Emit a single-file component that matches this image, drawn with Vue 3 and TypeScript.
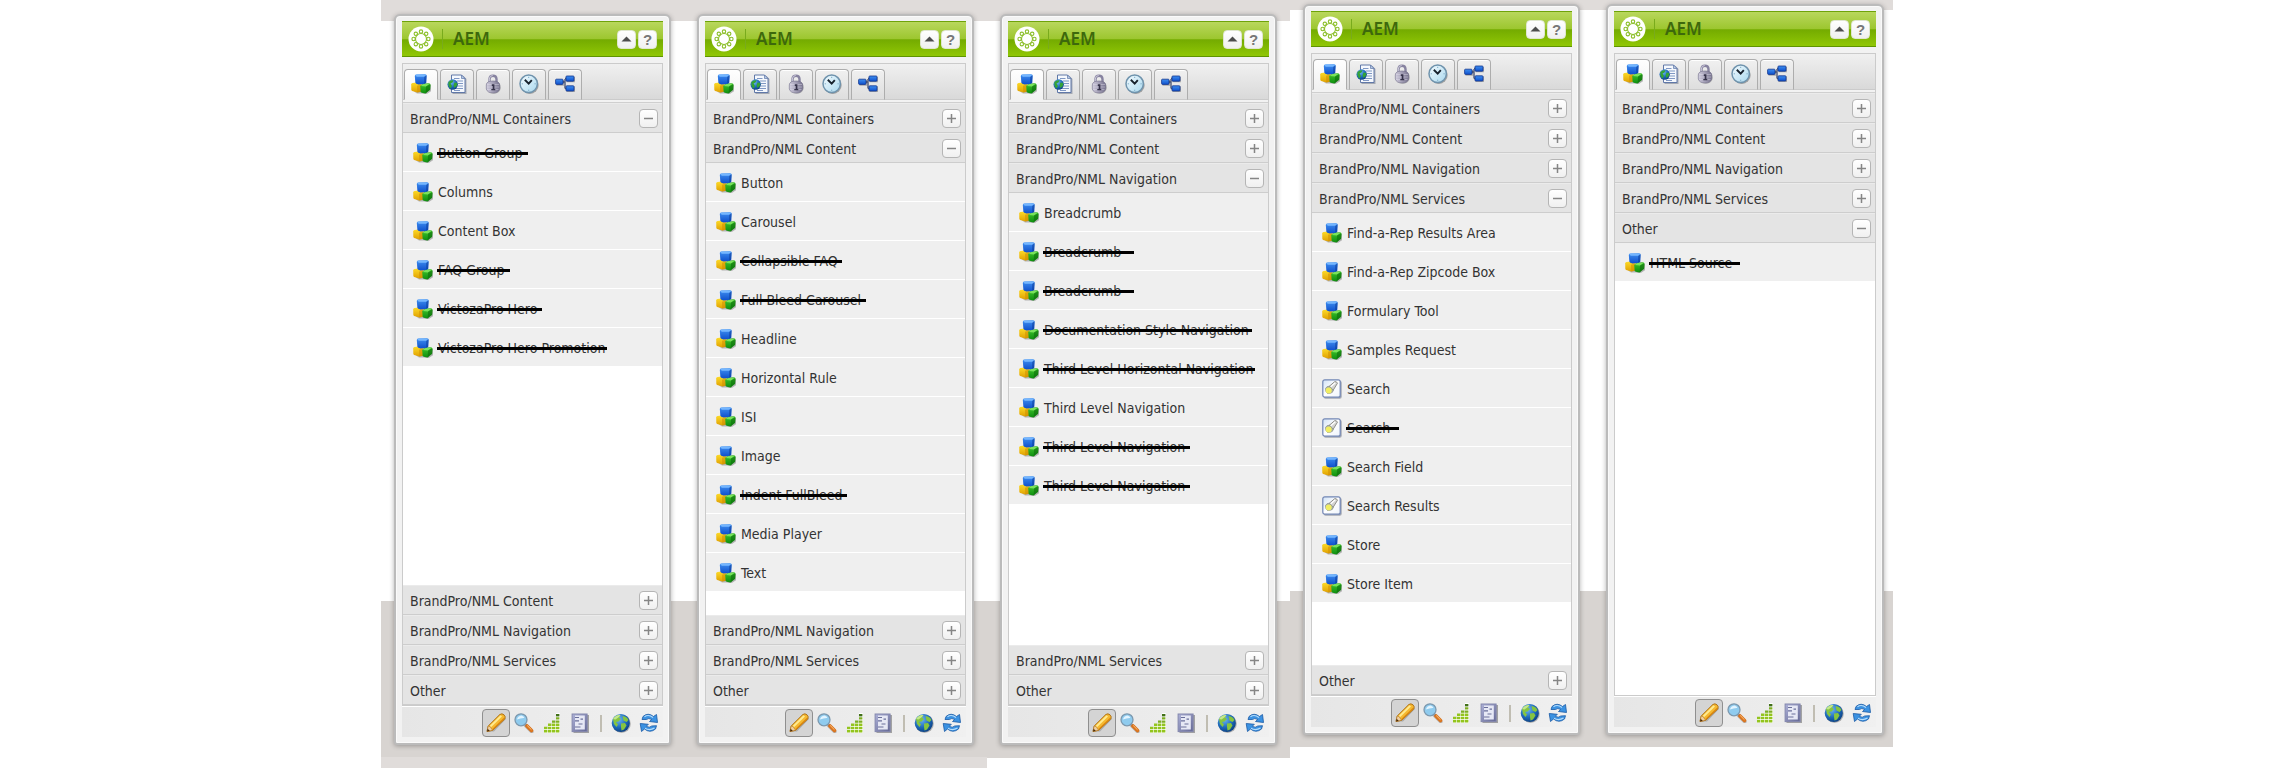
<script setup lang="ts">
import { ref } from 'vue'

interface Item {
  name: string
  icon?: string
  // how far the strike line runs past the end of a retired name, in pixels
  strike?: number
}

interface Panel {
  id: string
  tone: string
  open: number
  items: Item[]
}

const groups: string[] = [
  'BrandPro/NML Containers',
  'BrandPro/NML Content',
  'BrandPro/NML Navigation',
  'BrandPro/NML Services',
  'Other',
]

const tabs = [
  { icon: 'blocks', label: 'Components' },
  { icon: 'page', label: 'Page' },
  { icon: 'lock', label: 'Information' },
  { icon: 'clock', label: 'Versioning' },
  { icon: 'flow', label: 'Workflow' },
]

const panels = ref<Panel[]>([
  {
    id: 'containers',
    tone: 'tall',
    open: 0,
    items: [
      { name: 'Button Group', strike: 5 },
      { name: 'Columns' },
      { name: 'Content Box' },
      { name: 'FAQ Group', strike: 5 },
      { name: 'VictozaPro Hero', strike: 5 },
      { name: 'VictozaPro Hero Promotion', strike: 2 },
    ],
  },
  {
    id: 'content',
    tone: 'tall',
    open: 1,
    items: [
      { name: 'Button' },
      { name: 'Carousel' },
      { name: 'Collapsible FAQ', strike: 4 },
      { name: 'Full Bleed Carousel', strike: 5 },
      { name: 'Headline' },
      { name: 'Horizontal Rule' },
      { name: 'ISI' },
      { name: 'Image' },
      { name: 'Indent FullBleed', strike: 5 },
      { name: 'Media Player' },
      { name: 'Text' },
    ],
  },
  {
    id: 'navigation',
    tone: 'medium',
    open: 2,
    items: [
      { name: 'Breadcrumb' },
      { name: 'Breadcrumb', strike: 13 },
      { name: 'Breadcrumb', strike: 13 },
      { name: 'Documentation Style Navigation', strike: 3 },
      { name: 'Third Level Horizontal Navigation', strike: 1 },
      { name: 'Third Level Navigation' },
      { name: 'Third Level Navigation', strike: 5 },
      { name: 'Third Level Navigation', strike: 5 },
    ],
  },
  {
    id: 'services',
    tone: 'short',
    open: 3,
    items: [
      { name: 'Find-a-Rep Results Area' },
      { name: 'Find-a-Rep Zipcode Box' },
      { name: 'Formulary Tool' },
      { name: 'Samples Request' },
      { name: 'Search', icon: 'torch' },
      { name: 'Search', icon: 'torch', strike: 9 },
      { name: 'Search Field' },
      { name: 'Search Results', icon: 'torch' },
      { name: 'Store' },
      { name: 'Store Item' },
    ],
  },
  {
    id: 'other',
    tone: 'short',
    open: 4,
    items: [{ name: 'HTML Source', strike: 8 }],
  },
])
</script>

<template>
  <svg class="sprite" aria-hidden="true">
    <defs>
      <linearGradient id="gBlue" x1="0" y1="0" x2="0" y2="1">
        <stop offset="0" stop-color="#3f8ff0" /><stop offset="1" stop-color="#0f50cc" />
      </linearGradient>
      <linearGradient id="gGreen" x1="0" y1="0" x2="0" y2="1">
        <stop offset="0" stop-color="#3fc42c" /><stop offset="1" stop-color="#0f8f10" />
      </linearGradient>
      <linearGradient id="gYellow" x1="0" y1="0" x2="0" y2="1">
        <stop offset="0" stop-color="#fddc2a" /><stop offset="1" stop-color="#e0a000" />
      </linearGradient>
      <linearGradient id="gLock" x1="0" y1="0" x2="1" y2="0">
        <stop offset="0" stop-color="#cfcbdd" /><stop offset="1" stop-color="#77738f" />
      </linearGradient>
      <radialGradient id="gGlobe" cx=".38" cy=".3" r=".75">
        <stop offset="0" stop-color="#6fb8f5" /><stop offset=".6" stop-color="#1c68b8" /><stop offset="1" stop-color="#0b3c7d" />
      </radialGradient>
      <linearGradient id="gClock" x1="0" y1="0" x2="1" y2="1">
        <stop offset="0" stop-color="#f4fbff" /><stop offset="1" stop-color="#a9d8ee" />
      </linearGradient>
      <linearGradient id="gDoc" x1="0" y1="0" x2="1" y2="1">
        <stop offset="0" stop-color="#aeb2d8" /><stop offset="1" stop-color="#636794" />
      </linearGradient>
      <linearGradient id="gTorch" x1="0" y1="0" x2="1" y2="1">
        <stop offset="0" stop-color="#cfe1f7" /><stop offset=".5" stop-color="#ffffff" /><stop offset="1" stop-color="#eef4fb" />
      </linearGradient>
    </defs>

    <symbol id="blocks" viewBox="0 0 20 20">
      <path d="M3 17.500 6 19.500H11L15 20.500 20.500 17V12L17 9H11Z" fill="#000" opacity=".25" />
      <path d="M.2 10.300Q.3 9.300 1.500 9L8 8.300 10.500 10V17.500L6.500 18.600 1.200 17Q.4 16.600.3 15.500Z" fill="url(#gYellow)" />
      <path d="M6 11.800 10.300 10.400V17.500L6.300 18.600Z" fill="#c98800" opacity=".5" />
      <path d="M3.800 2Q3.900.9 5 .6L14 .3Q15.700.5 15.700 1.800L15.200 8.500Q14.900 9.600 13.800 9.900L7.500 10.400Q4.700 10.200 4.400 8.800Z" fill="url(#gBlue)" />
      <path d="M4.200 1.300 6.500.5 15.300.7 13.300 2.700 5.800 2.800Z" fill="#74b6ff" />
      <path d="M13.200 2.900 15.600 1.300 15.200 8.600 13.200 9.900Z" fill="#08348f" opacity=".5" />
      <path d="M9.200 12 12 10 18.200 9.300Q19.500 9.800 19.500 11L19.100 15.700 14.500 19.400 10.800 18.700Q9.700 18.200 9.600 17.200Z" fill="url(#gGreen)" />
      <path d="M9.800 12 12.500 10.100 18.600 9.700 15 12.500Z" fill="#7be25c" />
      <path d="M15 12.500 19.400 10.300 19.100 15.700 14.700 19.200Z" fill="#076008" opacity=".5" />
    </symbol>

    <symbol id="page" viewBox="0 0 20 20">
      <path d="M5.500 2H16.500L19.500 5V20H5.500Z" fill="#33415f" opacity=".35" />
      <path d="M4.500 1H14.500L18 4.500V18.500H4.500Z" fill="#f5f8fd" stroke="#6078a8" />
      <path d="M14.500 1V4.500H18Z" fill="#b9cbe8" stroke="#6078a8" stroke-width=".7" />
      <path d="M7 4.500H12.500M10 7H16M11 9.500H16M11 12H16M9 14.500H16M7 16.500H13" stroke="#7f97c4" stroke-width="1.200" />
      <circle cx="5.700" cy="10.500" r="5.200" fill="url(#gGlobe)" />
      <path d="M1.500 8Q4 5.500 6.500 6.500L5.500 8.500 3.500 9.500 5 12 3.500 14.500Q.8 12 1.500 8ZM7.500 8.500 10.300 9 9.800 12 7.500 14 6.500 11.500Z" fill="#35a336" />
    </symbol>

    <symbol id="lock" viewBox="0 0 20 20">
      <path d="M6.500 9V5Q6.700 1.700 10 1.700T13.500 5V9" fill="none" stroke="#8783a0" stroke-width="2.400" />
      <path d="M6.300 8V5Q6.500 1.500 9.700 1.500" fill="none" stroke="#d5d2e2" stroke-width=".9" />
      <ellipse cx="11" cy="13.500" rx="6.800" ry="6.200" fill="#222" opacity=".25" />
      <path d="M3.300 11Q3.300 7 10 7T16.700 11V15Q15.500 19 10 19T3.300 15Z" fill="url(#gLock)" stroke="#716d88" stroke-width=".6" />
      <path d="M4 10.500H16M4 13H16M4 15.500H15.500" stroke="#e2e0ec" stroke-width=".6" opacity=".7" />
      <path d="M8.800 10.200H11.400V15.500H9.700V12H8.800ZM8.300 15H12.300V16.200H8.300Z" fill="#36334a" />
    </symbol>

    <symbol id="clock" viewBox="0 0 20 20">
      <circle cx="10.700" cy="10.900" r="9" fill="#222" opacity=".35" />
      <circle cx="9.700" cy="9.800" r="8.700" fill="url(#gClock)" stroke="#6f93ad" stroke-width="1.500" />
      <path d="M9.700 2.800V4M9.700 15.700V16.900M2.700 9.800H3.900M15.500 9.800H16.700" stroke="#7ba9c4" />
      <path d="M5.800 5.800 9.700 9.600 12.800 6.200" fill="none" stroke="#17212c" stroke-width="1.900" />
    </symbol>

    <symbol id="flow" viewBox="0 0 20 20">
      <path d="M7 8H10M10 5V14.500M10 4.500H12M10 14.500H12" fill="none" stroke="#4c5878" stroke-width="1.400" />
      <path d="M1.500 6H9V11.700H1.500ZM11.500 3H20.500V8.200H11.500ZM11.500 12.500H20.500V18H11.500Z" fill="#222" opacity=".3" />
      <g fill="url(#gBlue)" stroke="#11358f" stroke-width=".8">
        <rect x=".6" y="5.200" width="7.400" height="5.200" rx=".8" />
        <rect x="11" y="2" width="8" height="5.200" rx=".8" />
        <rect x="11" y="11.800" width="8" height="5.200" rx=".8" />
      </g>
    </symbol>

    <symbol id="torch" viewBox="0 0 20 20">
      <rect x="1.700" y="1.700" width="18" height="18" rx="2" fill="#333d55" opacity=".4" />
      <rect x=".8" y=".8" width="17.400" height="17.400" rx="2" fill="url(#gTorch)" stroke="#7286b4" stroke-width="1.200" />
      <path d="M7 7.500 12.500 2.800Q14.500 2 15.500 4.200L11 11.500Z" fill="#d3d3d0" stroke="#85857f" stroke-width=".9" />
      <path d="M8.500 8 13.300 3.700" stroke="#fff" stroke-width="1.200" />
      <path d="M3.500 9.500Q4.500 7 7.500 7.200L11.300 11.200Q11 14 8.500 14.200L5.500 14.500Q3 12.500 3.500 9.500Z" fill="#aab0a8" stroke="#7e867f" stroke-width=".6" />
      <ellipse cx="6.700" cy="11.500" rx="3" ry="2.900" fill="#f1ee62" />
    </symbol>

    <symbol id="pencil" viewBox="0 0 20 20">
      <path d="M2 18.500 8 18.500 20 6 18 3Z" fill="#000" opacity=".18" />
      <path d="M1 18.500 2.200 13 13.800 1.500Q16 0 18 1.800T18.800 6L6.600 17.300Z" fill="#f6b931" stroke="#a86b12" stroke-width=".9" />
      <path d="M3.800 12.800 14.500 2.300 16 3.500 5 14.200Z" fill="#ffeb90" />
      <path d="M6.400 16 18 4.800 18.600 6 7 17Z" fill="#d98510" />
      <path d="M1 18.500 2.200 13 4 13.500 6.600 17.300Z" fill="#f0cfa0" stroke="#a86b12" stroke-width=".5" />
      <path d="M1 18.600 1.600 15.800 3.800 17.800Z" fill="#4a2c0c" />
    </symbol>

    <symbol id="magnifier" viewBox="0 0 20 20">
      <path d="M11.500 12.500 17.800 18.800" stroke="#555" stroke-width="3.500" stroke-linecap="round" opacity=".35" />
      <path d="M11.500 11.500 13 13" stroke="#7f8c99" stroke-width="2.500" />
      <path d="M13 13 17.500 17.500" stroke="#d9731d" stroke-width="3.600" stroke-linecap="round" />
      <path d="M13.200 12.500 17.500 16.800" stroke="#ffc07a" stroke-width="1" />
      <circle cx="7" cy="6.800" r="6" fill="#8fcbee" stroke="#7c98ae" stroke-width="1.300" />
      <path d="M3 6.500Q3.500 3 7.500 2.500 10 3 10.500 5 7 4.800 3 6.500Z" fill="#e2f4ff" />
    </symbol>

    <symbol id="bars" viewBox="0 0 20 20">
      <path d="M2 16H18V20H2ZM6 13H18V16H6ZM10 10H18V13H10ZM14 0H18V10H14Z" fill="#fff" />
      <path d="M2 17H5.400V19.400H2ZM6 17H9.400V19.400H6ZM10 17H13.400V19.400H10ZM14 17H17.400V19.400H14ZM2 13.800H5.400V16.200H2ZM6 13.800H9.400V16.200H6ZM10 13.800H13.400V16.200H10ZM14 13.800H17.400V16.200H14ZM6 10.600H9.400V13H6ZM10 10.600H13.400V13H10ZM14 10.600H17.400V13H14Z" fill="#93c41e" />
      <path d="M10 7.400H13.400V9.800H10ZM14 7.400H17.400V9.800H14ZM14 4.200H17.400V6.600H14Z" fill="#7eae22" />
      <path d="M14 1H17.400V3.400H14Z" fill="#42701a" />
    </symbol>

    <symbol id="sheet" viewBox="0 0 20 20">
      <path d="M3.500 2H19V20H3.500Z" fill="#333" opacity=".4" />
      <rect x="2.100" y="1" width="15" height="17.600" fill="url(#gDoc)" stroke="#8488ae" />
      <path d="M5 2.500H14.800V16.500H5Z" fill="#e6e8f5" />
      <path d="M5 4.500H9M5 7.800H9M8.500 11H12.500M5 14H10.500M10.500 6.200H13" stroke="#6a6f9a" stroke-width="1.200" />
    </symbol>

    <symbol id="globe" viewBox="0 0 20 20">
      <circle cx="10.600" cy="10.800" r="9.200" fill="#222" opacity=".3" />
      <circle cx="9.800" cy="10" r="9.100" fill="url(#gGlobe)" />
      <path d="M2 6Q5 1.500 9.500 2L8 4.500 10 6 7.500 8.500 5 9 7 11.500 5.500 14 3 11ZM11.500 3Q16 3.500 17.500 7L15.500 9 12.500 7.500ZM10 10.500 14 10 15.500 12.500 13 16.500 10.500 17.500 10 14Z" fill="#86c440" />
      <path d="M2 6Q5 1.500 9.500 2L8 4 4.500 6.500Z" fill="#c3e78b" />
    </symbol>

    <symbol id="refresh" viewBox="0 0 20 20">
      <path d="M4 3.500Q9-1 14.500 3.500L17.500 1.500 18.500 9.500 10.500 8.500 12.700 6.500Q9.500 4.500 7.500 6.500L3 6.500Z" fill="#3b92e2" stroke="#1959a5" stroke-width=".8" />
      <path d="M5.500 3.700Q9.500 1 14 4.500" fill="none" stroke="#b5dcfb" stroke-width="1.100" />
      <path d="M16.500 16Q11 20.500 5.500 16L2.500 18.500 1.200 10.500 9.300 11.300 7.300 13.300Q10.500 15.300 12.700 13L17.500 12.700Z" fill="#3b92e2" stroke="#1959a5" stroke-width=".8" />
      <path d="M6 15.300Q10.500 18 15.500 15" fill="none" stroke="#b5dcfb" stroke-width="1.100" />
    </symbol>

    <symbol id="logo" viewBox="0 0 26 26">
      <circle cx="13" cy="13" r="12.500" fill="#fff" />
      <g fill="none" stroke="#8cbf2a" stroke-width="1.100">
        <circle cx="13" cy="13" r="5.500" />
        <circle cx="13" cy="5.600" r="1.700" />
        <circle cx="18.200" cy="7.800" r="1.700" />
        <circle cx="20.400" cy="13" r="1.700" />
        <circle cx="18.200" cy="18.200" r="1.700" />
        <circle cx="13" cy="20.400" r="1.700" />
        <circle cx="7.800" cy="18.200" r="1.700" />
        <circle cx="5.600" cy="13" r="1.700" />
        <circle cx="7.800" cy="7.800" r="1.700" />
      </g>
    </symbol>
  </svg>

  <main class="board">
    <section v-for="panel in panels" :key="panel.id" class="column" :class="panel.tone">
      <aside class="panel">
        <header class="titlebar">
          <svg class="logo" aria-hidden="true"><use href="#logo" /></svg>
          <h2 class="title">AEM</h2>
          <button type="button" class="square" aria-label="Collapse">
            <svg viewBox="0 0 17 17" aria-hidden="true"><path d="M3.500 10.500 8.500 5.500 13.500 10.500Z" fill="#4d4d4d" /></svg>
          </button>
          <button type="button" class="square help" aria-label="Help">?</button>
        </header>

        <div class="frame">
          <nav class="tabs">
            <button
              v-for="(tab, i) in tabs"
              :key="tab.icon"
              type="button"
              class="tab"
              :class="{ active: i === 0 }"
              :aria-label="tab.label"
            >
              <svg class="icon" aria-hidden="true"><use :href="'#' + tab.icon" /></svg>
            </button>
          </nav>

          <div class="accordion">
            <template v-for="(group, g) in groups" :key="group">
              <div class="group">
                <h3 class="group-name">{{ group }}</h3>
                <button
                  type="button"
                  class="square"
                  :aria-label="group"
                  :aria-expanded="panel.open === g"
                  @click="panel.open = g"
                >
                  <svg viewBox="0 0 17 17" aria-hidden="true">
                    <path :d="panel.open === g ? 'M4 8.500H13' : 'M4 8.500H13M8.500 4V13'" stroke="#858585" stroke-width="1.500" />
                  </svg>
                </button>
              </div>
              <ul v-if="panel.open === g" class="items">
                <li v-for="(item, i) in panel.items" :key="i" class="item">
                  <svg class="icon" aria-hidden="true"><use :href="'#' + (item.icon ?? 'blocks')" /></svg>
                  <del v-if="item.strike" class="retired" :style="{ '--tail': item.strike + 'px' }">{{ item.name }}</del>
                  <span v-else>{{ item.name }}</span>
                </li>
              </ul>
            </template>
          </div>
        </div>

        <footer class="toolbar">
          <button type="button" class="tool pressed" aria-label="Edit"><svg class="icon" aria-hidden="true"><use href="#pencil" /></svg></button>
          <button type="button" class="tool" aria-label="Preview"><svg class="icon" aria-hidden="true"><use href="#magnifier" /></svg></button>
          <button type="button" class="tool" aria-label="Analytics"><svg class="icon" aria-hidden="true"><use href="#bars" /></svg></button>
          <button type="button" class="tool" aria-label="Design"><svg class="icon" aria-hidden="true"><use href="#sheet" /></svg></button>
          <span class="divider"></span>
          <button type="button" class="tool" aria-label="Websites"><svg class="icon" aria-hidden="true"><use href="#globe" /></svg></button>
          <button type="button" class="tool" aria-label="Reload"><svg class="icon" aria-hidden="true"><use href="#refresh" /></svg></button>
        </footer>
      </aside>
    </section>
  </main>
</template>

<style>
body {
  margin: 0;
  background: #fff;
}
</style>

<style scoped>
.sprite {
  position: absolute;
  width: 0;
  height: 0;
}

.board {
  box-sizing: border-box;
  max-width: 1512px;
  min-height: 100vh;
  margin: 0 auto;
  display: grid;
  grid-template-columns: repeat(4, minmax(0, 303fr)) minmax(0, 300fr);
  font-family: 'DejaVu Sans Condensed', 'Noto Sans', sans-serif;
  font-size: 14px;
  color: #333;
}

.column {
  display: flex;
  padding: 14px 13px 24px;
}
.column:last-child {
  padding-right: 9px;
}
.column.tall {
  background: linear-gradient(#e0dcda 21px, #fff 21px, #fff calc(100% - 168px), #d8d4d1 calc(100% - 168px), #d8d4d1 calc(100% - 12px), #e0dcda calc(100% - 12px), #e0dcda calc(100% - 1px), #fff calc(100% - 1px));
}
.column.medium {
  background: linear-gradient(#e0dcda 21px, #fff 21px, #fff calc(100% - 168px), #d8d4d1 calc(100% - 168px), #d8d4d1 calc(100% - 11px), #fff calc(100% - 11px));
}
.column.short {
  padding-top: 4px;
  padding-bottom: 34px;
  background: linear-gradient(#e0dcda 10px, #fff 10px, #fff calc(100% - 178px), #d8d4d1 calc(100% - 178px), #d8d4d1 calc(100% - 22px), #fff calc(100% - 22px));
}

.panel {
  box-sizing: border-box;
  flex: 1;
  min-width: 0;
  display: flex;
  flex-direction: column;
  padding: 5px 6px 6px;
  border: 2px solid #bbb;
  border-radius: 6px 6px 3px 3px;
  background: #f2f2f2;
  box-shadow: 0 1px 5px rgba(0, 0, 0, 0.3), inset 0 0 0 1px #fafafa;
}

.titlebar {
  box-sizing: border-box;
  height: 36px;
  display: flex;
  align-items: center;
  gap: 2px;
  padding: 0 6px;
  border-top: 1px solid #6fa30a;
  border-bottom: 1px solid #5f9400;
  background: linear-gradient(#b9d75c, #9cc62f 50%, #74ab00 52%, #90c705);
}
.logo {
  width: 26px;
  height: 26px;
}
.title {
  flex: 1;
  margin: 0 0 0 6px;
  padding-left: 10px;
  border-left: 1px solid #79ab1c;
  font-family: 'Noto Sans', 'Open Sans', sans-serif;
  font-size: 17px;
  line-height: 20px;
  font-weight: 600;
  color: #3d680c;
}

.square {
  flex: none;
  box-sizing: border-box;
  width: 19px;
  height: 19px;
  padding: 0;
  display: grid;
  place-items: center;
  border: 1px solid #b5b5b5;
  border-radius: 4px;
  background: linear-gradient(#fff, #f0f0f0);
}
.square svg {
  width: 17px;
  height: 17px;
}
.titlebar .square {
  border-color: #dfe6cf;
}
.help {
  font: 700 15px/17px 'Liberation Sans', Arial, sans-serif;
  color: #777;
}

.frame {
  flex: 1;
  display: flex;
  flex-direction: column;
  margin-top: 6px;
  border: 1px solid #cbcbcb;
}
.tabs {
  display: flex;
  gap: 2px;
  height: 30px;
  padding: 5px 1px 0;
  border-bottom: 1px solid #cbcbcb;
  background: linear-gradient(#f0f0f0, #d9d9d9);
}
.tab {
  box-sizing: border-box;
  width: 34px;
  height: 31px;
  padding: 0 0 2px;
  display: grid;
  place-items: center;
  border: 1px solid #adadad;
  border-bottom-color: #cbcbcb;
  border-radius: 4px 4px 0 0;
  background: linear-gradient(#f0f0f0, #dedede);
  box-shadow: inset 0 1px 0 #fff;
}
.tab.active {
  border-bottom-color: #f1f1f1;
  background: linear-gradient(#fff, #f1f1f1);
}
.icon {
  display: block;
  width: 20px;
  height: 20px;
  overflow: visible;
}

.accordion {
  flex: 1;
  display: flex;
  flex-direction: column;
  margin-top: 2px;
  border-top: 1px solid #cfcfcf;
  background: #fff;
}
.group {
  box-sizing: border-box;
  height: 30px;
  display: flex;
  align-items: center;
  justify-content: space-between;
  padding: 1px 4px 0 7px;
  border-top: 1px solid #ebebeb;
  border-bottom: 1px solid #cdcdcd;
  background: #e4e4e4;
}
.group-name {
  margin: 0;
  font-size: 14px;
  line-height: 20px;
  font-weight: 400;
}
.items {
  flex: 1;
  margin: 0;
  padding: 0;
  list-style: none;
}
.item {
  box-sizing: border-box;
  height: 39px;
  display: flex;
  align-items: center;
  gap: 5px;
  padding: 2px 10px 0;
  border-bottom: 1px solid #fff;
  background: #efefef;
  line-height: 20px;
  white-space: nowrap;
}
.retired {
  position: relative;
  text-decoration: none;
}
.retired::after {
  content: '';
  position: absolute;
  top: 9px;
  left: -1px;
  right: calc(0px - var(--tail));
  height: 3px;
  background: #000;
}

.toolbar {
  display: flex;
  justify-content: flex-end;
  padding-top: 2px;
  border-top: 1px solid #fff;
  background: linear-gradient(90deg, #e6e6e6, #f0f0f0);
}
.tool {
  box-sizing: border-box;
  width: 28px;
  height: 28px;
  padding: 0;
  display: grid;
  place-items: center;
  border: 1px solid transparent;
  border-radius: 4px;
  background: none;
}
.tool.pressed {
  border-color: #8f8f8f;
  background: #d4d4d4;
}
.divider {
  width: 2px;
  height: 17px;
  margin: 6px 5px 0 6px;
  background: #c0bdb2;
}
</style>
